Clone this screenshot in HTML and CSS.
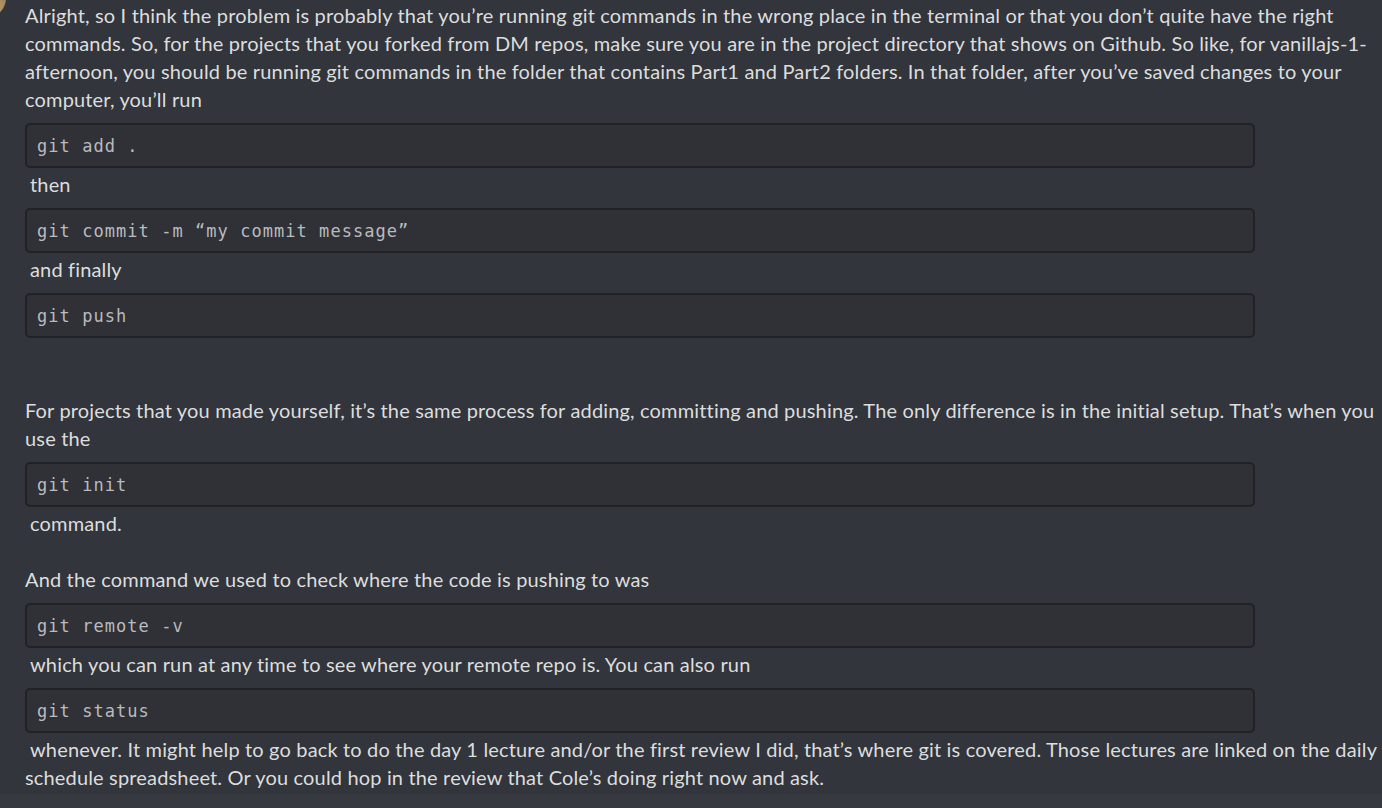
FILE: index.html
```html
<!DOCTYPE html>
<html>
<head>
<meta charset="utf-8">
<link rel="stylesheet" href="styles.css">
</head>
<body>
<div class="message">
  <div class="avatar"></div>
  <div class="content">
    <p class="line">Alright, so I think the problem is probably that you’re running git commands in the wrong place in the terminal or that you don’t quite have the right</p>
    <p class="line">commands. So, for the projects that you forked from DM repos, make sure you are in the project directory that shows on Github. So like, for vanillajs-1-</p>
    <p class="line">afternoon, you should be running git commands in the folder that contains Part1 and Part2 folders. In that folder, after you’ve saved changes to your</p>
    <p class="line">computer, you’ll run</p>
    <pre class="code">git add .</pre>
    <p class="line indent">then</p>
    <pre class="code">git commit -m “my commit message”</pre>
    <p class="line indent">and finally</p>
    <pre class="code">git push</pre>
    <p class="line blank"></p>
    <p class="line blank"></p>
    <p class="line">For projects that you made yourself, it’s the same process for adding, committing and pushing. The only difference is in the initial setup. That’s when you</p>
    <p class="line">use the</p>
    <pre class="code">git init</pre>
    <p class="line indent">command.</p>
    <p class="line blank"></p>
    <p class="line">And the command we used to check where the code is pushing to was</p>
    <pre class="code">git remote -v</pre>
    <p class="line indent">which you can run at any time to see where your remote repo is. You can also run</p>
    <pre class="code">git status</pre>
    <p class="line indent">whenever. It might help to go back to do the day 1 lecture and/or the first review I did, that’s where git is covered. Those lectures are linked on the daily</p>
    <p class="line">schedule spreadsheet. Or you could hop in the review that Cole’s doing right now and ask.</p>
  </div>
</div>
</body>
</html>
```
FILE: styles.css
```css
html, body {
  margin: 0;
  padding: 0;
  background: #36393f;
  overflow: hidden;
  width: 1382px;
  height: 808px;
}
.message {
  position: relative;
  background: #32353b;
  height: 794px;
  overflow: hidden;
}
.avatar {
  position: absolute;
  left: -34px;
  top: -22px;
  width: 40px;
  height: 40px;
  border-radius: 50%;
  background: radial-gradient(circle at 80% 70%, #b89a68 0%, #7d6440 60%, #4a3d2c 100%);
}
.content {
  padding: 1px 0 0 25px;
  font-family: "Lato", "Noto Sans", sans-serif;
  font-size: 20px;
  letter-spacing: 0.16px;
  color: #dcddde;
  white-space: nowrap;
}
.line {
  margin: 0;
  height: 28px;
  line-height: 28px;
}
.indent {
  padding-left: 5px;
}
.code {
  margin: 10px 0 2px 0;
  width: 1230px;
  box-sizing: border-box;
  height: 45px;
  background: #2f3136;
  border: 2px solid #202225;
  border-radius: 5px;
  padding: 0 0 0 10px;
  font-family: "DejaVu Sans Mono", monospace;
  font-size: 17px;
  letter-spacing: 1.05px;
  line-height: 43px;
  color: #b9bbbe;
}
```
